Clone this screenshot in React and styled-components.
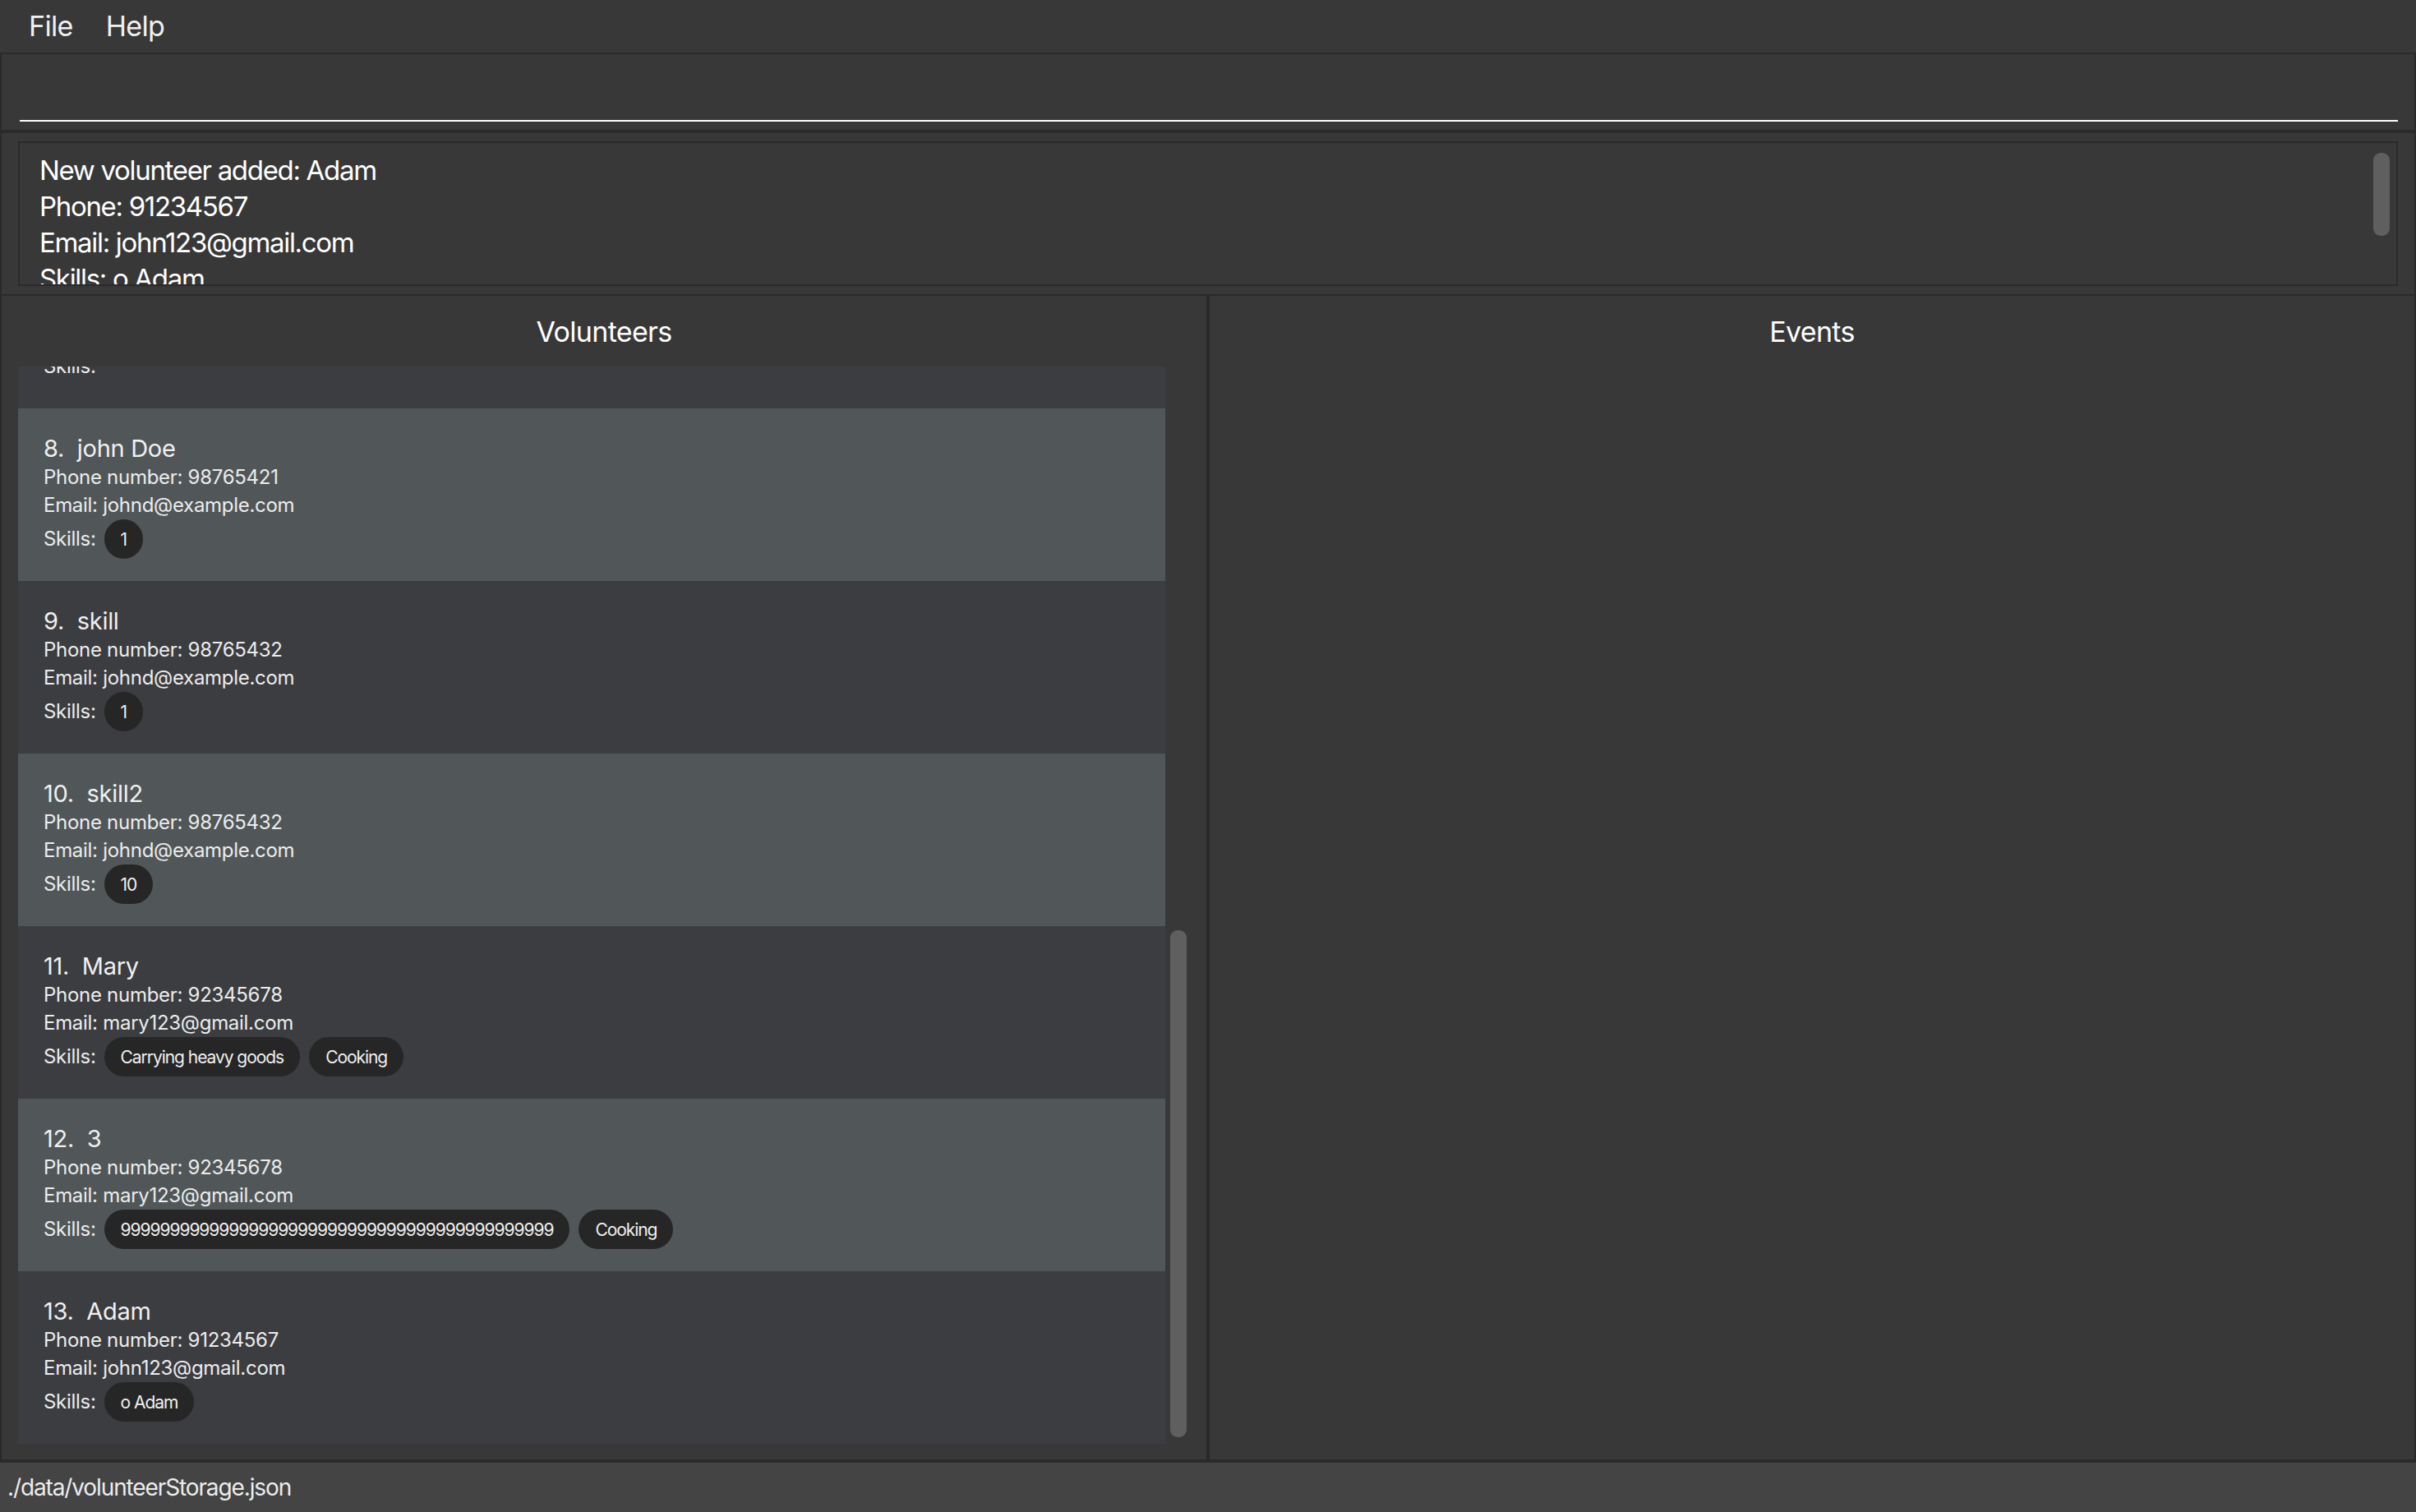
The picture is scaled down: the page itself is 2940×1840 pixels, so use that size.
import React from "react";
import styled, { createGlobalStyle } from "styled-components";

const volunteers = [
  { id: 7, name: "Amy", phone: "98765400", email: "amy@example.com", skills: [] },
  { id: 8, name: "john Doe", phone: "98765421", email: "johnd@example.com", skills: ["1"] },
  { id: 9, name: "skill", phone: "98765432", email: "johnd@example.com", skills: ["1"] },
  { id: 10, name: "skill2", phone: "98765432", email: "johnd@example.com", skills: ["10"] },
  {
    id: 11,
    name: "Mary",
    phone: "92345678",
    email: "mary123@gmail.com",
    skills: ["Carrying heavy goods", "Cooking"]
  },
  {
    id: 12,
    name: "3",
    phone: "92345678",
    email: "mary123@gmail.com",
    skills: ["9".repeat(44), "Cooking"]
  },
  { id: 13, name: "Adam", phone: "91234567", email: "john123@gmail.com", skills: ["o Adam"] }
];

const resultLines = [
  "New volunteer added: Adam",
  "Phone: 91234567",
  "Email: john123@gmail.com",
  "Skills: o Adam"
];

function App() {
  return (
    <>
      <GlobalStyle />
      <Window>
        <MenuBar>
          <MenuItem>File</MenuItem>
          <MenuItem>Help</MenuItem>
        </MenuBar>

        <CommandPane>
          <CommandInput />
        </CommandPane>

        <ResultPane>
          <ResultBox>
            <ResultText>
              {resultLines.map((line) => (
                <div key={line}>{line}</div>
              ))}
            </ResultText>
            <ScrollThumb $height={101} $top={12} $right={8} />
          </ResultBox>
        </ResultPane>

        <MainPane>
          <Column>
            <PanelTitle>Volunteers</PanelTitle>
            <ListArea>
              <ListViewport>
                {volunteers.map((v) => (
                  <Card key={v.id} $alt={v.id % 2 === 0}>
                    <Name>{`${v.id}.  ${v.name}`}</Name>
                    <Detail>Phone number: {v.phone}</Detail>
                    <Detail>Email: {v.email}</Detail>
                    <SkillRow>
                      <Detail>Skills:</Detail>
                      {v.skills.map((s) => (
                        <Chip key={s}>{s}</Chip>
                      ))}
                    </SkillRow>
                  </Card>
                ))}
              </ListViewport>
              <ListScroll>
                <ScrollThumb $height={617} $top={0} $right={0} />
              </ListScroll>
            </ListArea>
          </Column>
          <Divider />
          <Column>
            <PanelTitle>Events</PanelTitle>
          </Column>
        </MainPane>

        <StatusBar>./data/volunteerStorage.json</StatusBar>
      </Window>
    </>
  );
}

export default App;

const GlobalStyle = createGlobalStyle`
  *, *::before, *::after {
    box-sizing: border-box;
  }
  html, body {
    margin: 0;
    padding: 0;
    background: #383838;
  }
  body {
    font-family: Inter, "Noto Sans", sans-serif;
    color: #f2f2f2;
  }
`;

const Window = styled.div`
  display: flex;
  flex-direction: column;
  height: 100vh;
  background: #383838;
  overflow: hidden;
`;

const MenuBar = styled.div`
  display: flex;
  align-items: center;
  gap: 40px;
  height: 66px;
  padding: 0 0 2px 35px;
  border-bottom: 2px solid #2a2a2a;
  flex-shrink: 0;
`;

const MenuItem = styled.span`
  font-size: 34px;
  letter-spacing: -0.02em;
  color: #f0f0f0;
`;

const CommandPane = styled.div`
  display: flex;
  align-items: flex-end;
  height: 94px;
  padding: 0 20px 10px 22px;
  border: 2px solid #2a2a2a;
  border-top: none;
  flex-shrink: 0;
`;

const CommandInput = styled.div`
  flex: 1;
  height: 40px;
  border-bottom: 2px solid #ffffff;
`;

const ResultPane = styled.div`
  display: flex;
  height: 200px;
  padding: 10px 20px;
  border: 2px solid #2a2a2a;
  flex-shrink: 0;
`;

const ResultBox = styled.div`
  flex: 1;
  display: flex;
  border: 2px solid #2a2a2a;
  overflow: hidden;
`;

const ResultText = styled.div`
  flex: 1;
  padding: 11px 24px 0;
  font-size: 33px;
  line-height: 44px;
  letter-spacing: -0.04em;
  color: #ffffff;
  overflow: hidden;
`;

const ScrollThumb = styled.div`
  width: 20px;
  height: ${(p) => p.$height}px;
  margin: ${(p) => p.$top}px ${(p) => p.$right}px 0 0;
  border-radius: 9px;
  background: #5f5f5f;
  flex-shrink: 0;
`;

const MainPane = styled.div`
  flex: 1;
  display: flex;
  min-height: 0;
  border: 2px solid #2a2a2a;
  border-top: none;
`;

const Column = styled.div`
  flex: 1;
  display: flex;
  flex-direction: column;
  min-width: 0;
`;

const Divider = styled.div`
  width: 4px;
  background: #2a2a2a;
  flex-shrink: 0;
`;

const PanelTitle = styled.div`
  height: 86px;
  display: flex;
  align-items: center;
  justify-content: center;
  font-size: 34px;
  letter-spacing: -0.02em;
  color: #ffffff;
  flex-shrink: 0;
`;

const ListArea = styled.div`
  flex: 1;
  display: flex;
  min-height: 0;
  padding: 0 24px 19px 20px;
`;

const ListViewport = styled.div`
  flex: 1;
  display: flex;
  flex-direction: column;
  justify-content: flex-end;
  overflow: hidden;
  margin-right: 6px;
`;

const ListScroll = styled.div`
  display: flex;
  align-items: flex-end;
  padding-bottom: 8px;
`;

const Card = styled.div`
  display: flex;
  flex-direction: column;
  height: 210px;
  padding: 31px 30px 0 31px;
  flex-shrink: 0;
  background: ${(p) => (p.$alt ? "#515759" : "#3c3d40")};
`;

const Name = styled.div`
  font-size: 29px;
  line-height: 36px;
  letter-spacing: -0.01em;
  white-space: pre;
  color: #f0f0f0;
`;

const Detail = styled.div`
  font-size: 24px;
  line-height: 34px;
  letter-spacing: -0.012em;
  color: #ececec;
  white-space: nowrap;
`;

const SkillRow = styled.div`
  display: flex;
  align-items: center;
  gap: 11px;
  height: 48px;

  & > ${Detail} {
    margin-right: -1px;
  }
`;

const Chip = styled.span`
  display: inline-flex;
  align-items: center;
  height: 48px;
  padding: 0 20px;
  border-radius: 24px;
  background: #262626;
  font-size: 21px;
  letter-spacing: -0.05em;
  color: #f0f0f0;
  white-space: nowrap;
`;

const StatusBar = styled.div`
  display: flex;
  align-items: center;
  height: 62px;
  padding-left: 9px;
  border-top: 2px solid #2a2a2a;
  background: #444444;
  font-size: 28px;
  letter-spacing: -0.04em;
  color: #ececec;
  flex-shrink: 0;
`;
